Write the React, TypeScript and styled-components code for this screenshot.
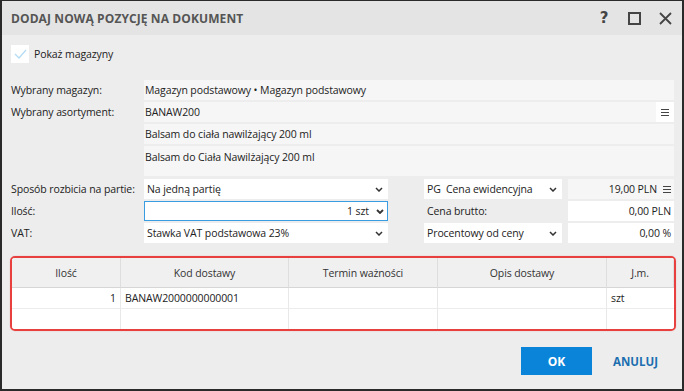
import React from "react";
import styled, { createGlobalStyle } from "styled-components";

const FS = "10.5px";

const Global = createGlobalStyle`
  html, body { margin: 0; padding: 0; }
  body { font-family: "Open Sans", "Noto Sans", sans-serif; font-size: ${FS}; letter-spacing: -0.1px; color: #222; }
  * { box-sizing: border-box; }
`;

const Window = styled.div`
  width: 684px;
  height: 391px;
  display: flex;
  flex-direction: column;
  background: #ededed;
  border-style: solid;
  border-color: #2a2a2a;
  border-width: 1px 2px 2px 2px;
`;

const TitleBar = styled.div`
  height: 34px;
  flex: none;
  display: flex;
  align-items: center;
  justify-content: space-between;
  padding: 0 10px 0 9px;
  background: #e4e4e4;
`;

const Title = styled.div`
  font-size: 12px;
  font-weight: 700;
  color: #555;
  letter-spacing: 0.1px;
`;

const TitleIcons = styled.div`
  display: flex;
  align-items: center;
  gap: 18px;
  color: #444;
`;

const HelpGlyph = styled.span`
  font-family: "DejaVu Sans", sans-serif;
  font-size: 15px;
  font-weight: 700;
  color: #444;
  width: 12px;
  text-align: center;
`;

const Body = styled.div`
  flex: 1;
  display: flex;
  flex-direction: column;
  padding: 10px 8px 0 9px;
`;

const CheckRow = styled.label`
  display: flex;
  align-items: center;
  gap: 5px;
  height: 18px;
  color: #222;
`;

const CheckBox = styled.span`
  width: 18px;
  height: 18px;
  background: #fff;
  display: flex;
  align-items: center;
  justify-content: center;
`;

const TopGrid = styled.div`
  margin-top: 17px;
  display: grid;
  grid-template-columns: 133px 1fr;
  row-gap: 2px;
`;

const Label = styled.div<{ $h?: number }>`
  height: ${(p) => p.$h ?? 20}px;
  display: flex;
  align-items: ${(p) => (p.$h ? "flex-start" : "center")};
  padding-top: ${(p) => (p.$h ? 3 : 0)}px;
  color: #222;
  white-space: nowrap;
`;

const ReadField = styled.div<{ $h?: number; $top?: boolean }>`
  height: ${(p) => p.$h ?? 20}px;
  background: #f6f6f6;
  display: flex;
  align-items: ${(p) => (p.$top ? "flex-start" : "center")};
  padding: ${(p) => (p.$top ? "4px 0 0 1px" : "0 0 0 1px")};
  color: #222;
  justify-content: space-between;
`;

const MenuBtn = styled.span<{ $bg?: string }>`
  width: 18px;
  height: 100%;
  background: ${(p) => p.$bg ?? "#fff"};
  display: flex;
  align-items: center;
  justify-content: center;
`;

const LowerGrid = styled.div`
  margin-top: 3px;
  display: grid;
  grid-template-columns: 133px 244px 1fr 106px;
  row-gap: 2px;
`;

const Select = styled.div<{ $focus?: boolean; $inset?: boolean }>`
  height: 20px;
  background: #fff;
  display: flex;
  align-items: center;
  gap: 6px;
  padding: 0 ${(p) => (p.$focus ? 2 : 3)}px 0 3px;
  margin: ${(p) => (p.$inset ? "0 6px 0 36px" : "0")};
  border: ${(p) => (p.$focus ? "1px solid #3b9de1" : "none")};
  color: #222;
`;

const SelectText = styled.span<{ $right?: boolean }>`
  flex: 1;
  text-align: ${(p) => (p.$right ? "right" : "left")};
  white-space: nowrap;
`;

const Chevron = styled.span<{ $pad?: number }>`
  display: flex;
  width: 10px;
  justify-content: center;
  margin-right: ${(p) => p.$pad ?? 0}px;
`;

const SubLabel = styled.div`
  height: 20px;
  display: flex;
  align-items: center;
  margin: 0 6px 0 36px;
  padding-left: 3px;
  color: #222;
`;

const ValueBox = styled.div<{ $grey?: boolean }>`
  height: 20px;
  background: ${(p) => (p.$grey ? "#f6f6f6" : "#fff")};
  display: flex;
  align-items: center;
  justify-content: flex-end;
  gap: 6px;
  padding-right: 3px;
  color: #222;
`;

const TableFrame = styled.div`
  margin: 13px -2px 0 -1px;
  border: 2px solid #e8403f;
  border-radius: 5px;
  overflow: hidden;
  box-shadow: 0 0 1px rgba(232, 64, 63, 0.5);
`;

const Grid = styled.div`
  display: grid;
  grid-template-columns: 109px 168px 149px 169px 1fr;
  background: #fff;
`;

const HeadCell = styled.div`
  height: 30px;
  background: #f0f0f0;
  border-right: 1px solid #dedede;
  border-bottom: 1px solid #d6d6d6;
  display: flex;
  align-items: center;
  justify-content: center;
  color: #333;
  &:last-child { border-right: none; }
`;

const Cell = styled.div<{ $right?: boolean; $last?: boolean; $bottom?: boolean }>`
  height: ${(p) => (p.$bottom ? 20 : 21)}px;
  border-right: ${(p) => (p.$last ? "none" : "1px solid #e8e8e8")};
  border-bottom: ${(p) => (p.$bottom ? "none" : "1px solid #ececec")};
  display: flex;
  align-items: center;
  justify-content: ${(p) => (p.$right ? "flex-end" : "flex-start")};
  padding: 0 4px;
  color: #222;
`;

const Footer = styled.div`
  margin-top: 16px;
  display: flex;
  justify-content: flex-end;
  align-items: center;
  gap: 21px;
  padding-right: 16px;
`;

const OkButton = styled.button`
  width: 71px;
  height: 28px;
  background: #0a84d8;
  border: none;
  color: #fff;
  font-family: "Open Sans", sans-serif;
  font-weight: 700;
  font-size: 12px;
`;

const TextButton = styled.button`
  background: none;
  border: none;
  padding: 0;
  color: #1b6fb0;
  font-family: "Open Sans", sans-serif;
  font-weight: 700;
  font-size: 11.5px;
`;

const ChevronIcon = ({ bold }: { bold?: boolean }) => (
  <svg width="8" height="5" viewBox="0 0 8 5">
    <polyline points="1,1 4,4 7,1" fill="none" stroke="#333" strokeWidth={bold ? 1.8 : 1.5} />
  </svg>
);

const MenuIcon = () => (
  <svg width="8" height="7" viewBox="0 0 8 7">
    <rect x="0" y="0" width="8" height="1" fill="#444" />
    <rect x="0" y="3" width="8" height="1" fill="#444" />
    <rect x="0" y="6" width="8" height="1" fill="#444" />
  </svg>
);

export default function App() {
  return (
    <>
      <Global />
      <Window>
        <TitleBar>
          <Title>DODAJ NOWĄ POZYCJĘ NA DOKUMENT</Title>
          <TitleIcons>
            <HelpGlyph>?</HelpGlyph>
            <svg width="13" height="13" viewBox="0 0 13 13">
              <rect x="1" y="1" width="11" height="11" fill="none" stroke="#444" strokeWidth="2" />
            </svg>
            <svg width="13" height="13" viewBox="0 0 13 13">
              <path d="M1 1 L12 12 M12 1 L1 12" stroke="#444" strokeWidth="1.8" />
            </svg>
          </TitleIcons>
        </TitleBar>
        <Body>
          <CheckRow>
            <CheckBox>
              <svg width="13" height="10" viewBox="0 0 13 10">
                <polyline points="1,5 5,9 12,1" fill="none" stroke="#b4dcf4" strokeWidth="1.3" />
              </svg>
            </CheckBox>
            Pokaż magazyny
          </CheckRow>
          <TopGrid>
            <Label>Wybrany magazyn:</Label>
            <ReadField>Magazyn podstawowy • Magazyn podstawowy</ReadField>
            <Label>Wybrany asortyment:</Label>
            <ReadField>
              BANAW200
              <MenuBtn>
                <MenuIcon />
              </MenuBtn>
            </ReadField>
            <Label />
            <ReadField>Balsam do ciała nawilżający 200 ml</ReadField>
            <Label $h={30} />
            <ReadField $h={30} $top>
              Balsam do Ciała Nawilżający 200 ml
            </ReadField>
          </TopGrid>
          <LowerGrid>
            <Label>Sposób rozbicia na partie:</Label>
            <Select>
              <SelectText>Na jedną partię</SelectText>
              <Chevron $pad={1}>
                <ChevronIcon />
              </Chevron>
            </Select>
            <Select $inset>
              <SelectText>PG&nbsp; Cena ewidencyjna</SelectText>
              <Chevron $pad={1}>
                <ChevronIcon />
              </Chevron>
            </Select>
            <ValueBox $grey>
              19,00 PLN
              <MenuIcon />
            </ValueBox>

            <Label>Ilość:</Label>
            <Select $focus>
              <SelectText $right>1 szt</SelectText>
              <Chevron>
                <ChevronIcon bold />
              </Chevron>
            </Select>
            <SubLabel>Cena brutto:</SubLabel>
            <ValueBox>0,00 PLN</ValueBox>

            <Label>VAT:</Label>
            <Select>
              <SelectText>Stawka VAT podstawowa 23%</SelectText>
              <Chevron $pad={1}>
                <ChevronIcon />
              </Chevron>
            </Select>
            <Select $inset>
              <SelectText>Procentowy od ceny</SelectText>
              <Chevron $pad={1}>
                <ChevronIcon />
              </Chevron>
            </Select>
            <ValueBox>0,00 %</ValueBox>
          </LowerGrid>
          <TableFrame>
            <Grid>
              <HeadCell>Ilość</HeadCell>
              <HeadCell>Kod dostawy</HeadCell>
              <HeadCell>Termin ważności</HeadCell>
              <HeadCell>Opis dostawy</HeadCell>
              <HeadCell>J.m.</HeadCell>
              <Cell $right>1</Cell>
              <Cell>BANAW2000000000001</Cell>
              <Cell />
              <Cell />
              <Cell $last>szt</Cell>
              <Cell $bottom />
              <Cell $bottom />
              <Cell $bottom />
              <Cell $bottom />
              <Cell $bottom $last />
            </Grid>
          </TableFrame>
          <Footer>
            <OkButton>OK</OkButton>
            <TextButton>ANULUJ</TextButton>
          </Footer>
        </Body>
      </Window>
    </>
  );
}
